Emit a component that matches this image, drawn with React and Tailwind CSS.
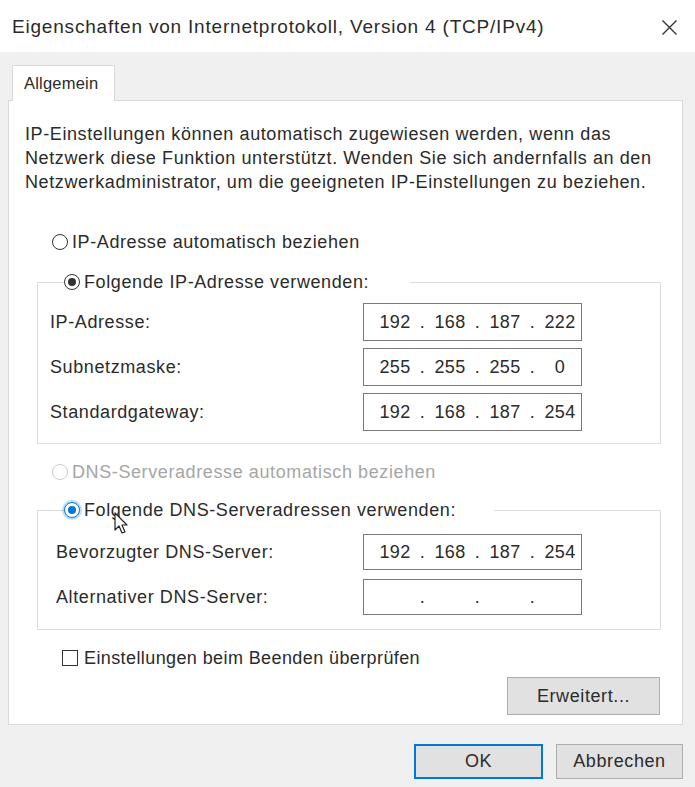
import React from "react";

const font = { fontFamily: '"Liberation Sans", Arial, sans-serif' };

function Radio({ checked = false, disabled = false, focus = false }) {
  let ring = "border-[#333333]";
  if (disabled) ring = "border-[#cccccc]";
  if (focus) ring = "border-[#0078d7] shadow-[0_0_0_2px_rgba(0,120,215,0.25)]";
  return (
    <span
      className={`flex h-[16px] w-[16px] shrink-0 items-center justify-center rounded-full border bg-white ${ring}`}
    >
      {checked ? (
        <span
          className={`h-[8px] w-[8px] rounded-full ${focus ? "bg-[#0078d7]" : "bg-[#333333]"}`}
        />
      ) : null}
    </span>
  );
}

function IpField({ parts = ["", "", "", ""], tall = false }) {
  return (
    <div
      className={`flex w-[219px] items-center border border-[#7a7a7a] bg-white pl-[12px] text-[18px] tracking-[0.3px] text-[#2b2b2b] ${
        tall ? "h-[38px]" : "h-[36px]"
      }`}
    >
      {parts.map((p, i) => (
        <React.Fragment key={i}>
          <span className="w-[38px] text-center">{p}</span>
          {i < 3 ? <span className="w-[17px] text-center">.</span> : null}
        </React.Fragment>
      ))}
    </div>
  );
}

function Row({ label, parts, tall, indent = false }) {
  return (
    <div className="flex items-center">
      <span className={`w-[313px] ${indent ? "pl-[6px]" : ""}`}>{label}</span>
      <IpField parts={parts} tall={tall} />
    </div>
  );
}

function Cursor() {
  return (
    <svg
      className="pointer-events-none absolute left-[114px] top-[512px]"
      width="16"
      height="24"
      viewBox="0 0 16 24"
    >
      <path
        d="M1 1 L1 18 L5 14 L8 21 L11 20 L8 13 L13 13 Z"
        fill="#ffffff"
        stroke="#222222"
        strokeWidth="1.2"
        strokeLinejoin="round"
      />
    </svg>
  );
}

export default function App() {
  return (
    <div
      className="relative h-[787px] w-[695px] overflow-hidden bg-[#f0f0f0] text-[18px] tracking-[0.6px] text-[#2b2b2b]"
      style={font}
    >
      {/* title bar */}
      <div className="flex h-[52px] items-center justify-between bg-white pl-[12px] pr-[17px]">
        <span className="whitespace-nowrap pt-[2px] text-[19px] tracking-[0.8px] text-[#2b2b2b]">
          Eigenschaften von Internetprotokoll, Version 4 (TCP/IPv4)
        </span>
        <svg width="17" height="17" viewBox="0 0 17 17" className="mt-[2px]">
          <path d="M1.5 1.5 L15.5 15.5 M15.5 1.5 L1.5 15.5" stroke="#333333" strokeWidth="1.4" />
        </svg>
      </div>

      {/* tab strip */}
      <div className="pl-[12px] pt-[13px]">
        <div className="relative z-10 -mb-px flex h-[36px] w-[103px] items-center border border-b-0 border-[#d9d9d9] bg-white pl-[11px] text-[16.5px] tracking-[0.2px]">
          Allgemein
        </div>
      </div>

      {/* tab panel */}
      <div className="ml-[8px] flex h-[625px] w-[675px] flex-col border border-[#d9d9d9] bg-white">
        <p className="whitespace-nowrap pl-[16px] pt-[21px] leading-[24px]">
          IP-Einstellungen können automatisch zugewiesen werden, wenn das
          <br />
          Netzwerk diese Funktion unterstützt. Wenden Sie sich andernfalls an den
          <br />
          Netzwerkadministrator, um die geeigneten IP-Einstellungen zu beziehen.
        </p>

        <label className="ml-[43px] mt-[36px] flex h-[24px] items-center gap-[4px]">
          <Radio />
          <span>IP-Adresse automatisch beziehen</span>
        </label>

        <fieldset className="ml-[28px] mt-[16px] w-[624px] border border-[#dcdcdc] px-[12px] pb-[12px]">
          <legend className="ml-[14px] pr-[41px]">
            <span className="flex h-[24px] items-center gap-[4px] bg-white">
              <Radio checked />
              <span>Folgende IP-Adresse verwenden:</span>
            </span>
          </legend>
          <div className="flex flex-col gap-[7px] pt-[9px]">
            <Row label="IP-Adresse:" parts={["192", "168", "187", "222"]} tall />
            <Row label="Subnetzmaske:" parts={["255", "255", "255", "0"]} tall />
            <Row label="Standardgateway:" parts={["192", "168", "187", "254"]} tall />
          </div>
        </fieldset>

        <label className="ml-[43px] mt-[16px] flex h-[24px] items-center gap-[4px] text-[#a6a6a6]">
          <Radio disabled />
          <span>DNS-Serveradresse automatisch beziehen</span>
        </label>

        <fieldset className="ml-[28px] mt-[14px] w-[624px] border border-[#dcdcdc] px-[12px] pb-[14px]">
          <legend className="ml-[14px] pr-[38px]">
            <span className="flex h-[24px] items-center gap-[4px] bg-white">
              <Radio checked focus />
              <span>Folgende DNS-Serveradressen verwenden:</span>
            </span>
          </legend>
          <div className="flex flex-col gap-[9px] pt-[12px]">
            <Row label="Bevorzugter DNS-Server:" parts={["192", "168", "187", "254"]} indent />
            <Row label="Alternativer DNS-Server:" indent />
          </div>
        </fieldset>

        <label className="ml-[53px] mt-[16px] flex h-[24px] items-center gap-[6px]">
          <span className="h-[16px] w-[16px] border border-[#333333] bg-white" />
          <span className="tracking-[0.4px]">Einstellungen beim Beenden überprüfen</span>
        </label>

        <div className="mr-[22px] mt-[7px] flex justify-end">
          <button className="h-[38px] w-[153px] border border-[#adadad] bg-[#e1e1e1]">
            Erweitert...
          </button>
        </div>
      </div>

      {/* dialog buttons */}
      <div className="flex justify-end gap-[13px] pr-[12px] pt-[19px]">
        <button className="h-[35px] w-[129px] border-2 border-[#0078d7] bg-[#e1e1e1]">
          OK
        </button>
        <button className="h-[35px] w-[127px] border border-[#adadad] bg-[#e1e1e1]">
          Abbrechen
        </button>
      </div>

      <Cursor />
    </div>
  );
}
